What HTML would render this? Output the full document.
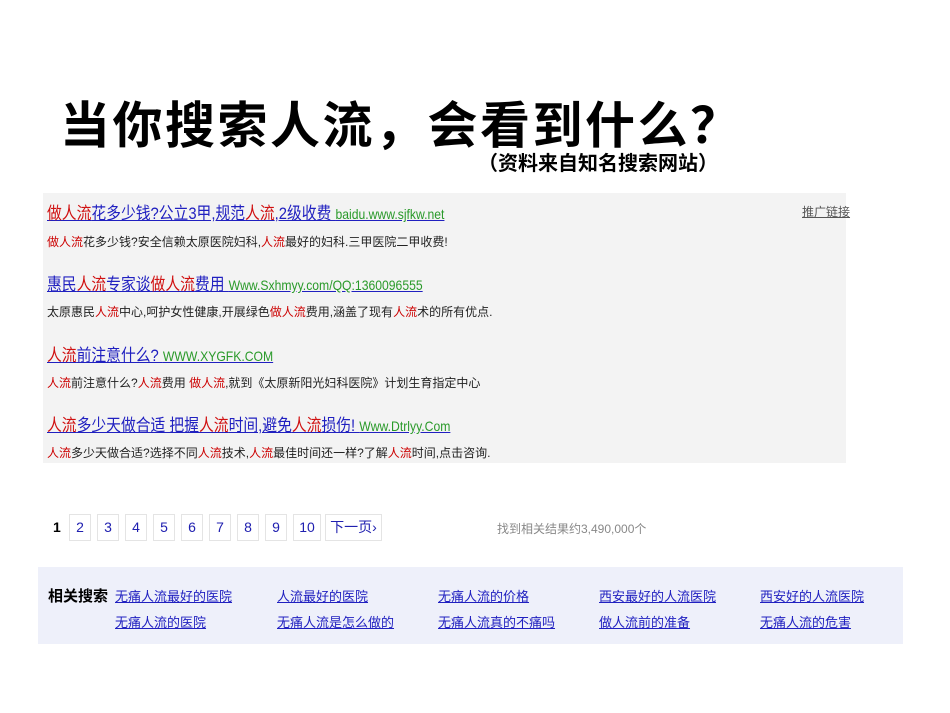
<!DOCTYPE html>
<html><head><meta charset="utf-8"><style>
body{margin:0;width:950px;height:713px;background:#fff;position:relative;overflow:hidden;font-family:"Liberation Sans","Noto Sans CJK SC",sans-serif}
.a{position:absolute;white-space:nowrap}
.r{color:#c00}
.t{font-size:17px;color:#2020c0;text-decoration:underline;transform:scaleX(.87);transform-origin:left top}
.t .r{color:#d01010}
.u{font-size:14px;color:#2a9a2a;text-decoration:none}
.d{font-size:12px;color:#222}
.d .r{color:#c00}
.pg{position:absolute;top:514px;height:25px;border:1px solid #e4e4e4;font-size:14px;color:#2020b0;text-align:center;line-height:25px}
.rel{font-size:13px;color:#2020c0;text-decoration:underline}
</style></head><body>
<div class="a" style="left:60px;top:86px;font-size:50px;font-weight:bold;color:#000;letter-spacing:2.5px;font-family:'Noto Sans CJK SC',sans-serif">当你搜索人流，会看到什么？</div>
<div class="a" style="left:478px;top:147px;font-size:20px;font-weight:bold;color:#000">（资料来自知名搜索网站）</div>
<div class="a" style="left:43px;top:193px;width:803px;height:270px;background:#f3f3f3"></div>
<div class="a" style="left:802px;top:203px;font-size:12px;color:#555;text-decoration:underline">推广链接</div>
<div class="a t" style="left:47px;top:199px"><span class="r">做人流</span>花多少钱?公立3甲,规范<span class="r">人流</span>,2级收费 <span class="u">baidu.www.sjfkw.net</span></div>
<div class="a d" style="left:47px;top:233px"><span class="r">做人流</span>花多少钱?安全信赖太原医院妇科,<span class="r">人流</span>最好的妇科.三甲医院二甲收费!</div>
<div class="a t" style="left:47px;top:270px">惠民<span class="r">人流</span>专家谈<span class="r">做人流</span>费用 <span class="u">Www.Sxhmyy.com/QQ:1360096555</span></div>
<div class="a d" style="left:47px;top:303px">太原惠民<span class="r">人流</span>中心,呵护女性健康,开展绿色<span class="r">做人流</span>费用,涵盖了现有<span class="r">人流</span>术的所有优点.</div>
<div class="a t" style="left:47px;top:341px"><span class="r">人流</span>前注意什么? <span class="u">WWW.XYGFK.COM</span></div>
<div class="a d" style="left:47px;top:374px"><span class="r">人流</span>前注意什么?<span class="r">人流</span>费用 <span class="r">做人流</span>,就到《太原新阳光妇科医院》计划生育指定中心</div>
<div class="a t" style="left:47px;top:411px"><span class="r">人流</span>多少天做合适 把握<span class="r">人流</span>时间,避免<span class="r">人流</span>损伤! <span class="u">Www.Dtrlyy.Com</span></div>
<div class="a d" style="left:47px;top:444px"><span class="r">人流</span>多少天做合适?选择不同<span class="r">人流</span>技术,<span class="r">人流</span>最佳时间还一样?了解<span class="r">人流</span>时间,点击咨询.</div>
<div class="a" style="left:53px;top:519px;font-size:14px;font-weight:bold;color:#000">1</div>
<div class="pg" style="left:69px;width:20px">2</div>
<div class="pg" style="left:97px;width:20px">3</div>
<div class="pg" style="left:125px;width:20px">4</div>
<div class="pg" style="left:153px;width:20px">5</div>
<div class="pg" style="left:181px;width:20px">6</div>
<div class="pg" style="left:209px;width:20px">7</div>
<div class="pg" style="left:237px;width:20px">8</div>
<div class="pg" style="left:265px;width:20px">9</div>
<div class="pg" style="left:293px;width:26px">10</div>
<div class="pg" style="left:325px;width:55px">下一页›</div>
<div class="a" style="left:497px;top:520px;font-size:12px;color:#888">找到相关结果约3,490,000个</div>
<div class="a" style="left:38px;top:567px;width:865px;height:77px;background:#eef0fa"></div>
<div class="a" style="left:48px;top:585px;font-size:15px;font-weight:bold;color:#000">相关搜索</div>
<div class="a rel" style="left:115px;top:586px">无痛人流最好的医院</div>
<div class="a rel" style="left:115px;top:612px">无痛人流的医院</div>
<div class="a rel" style="left:277px;top:586px">人流最好的医院</div>
<div class="a rel" style="left:277px;top:612px">无痛人流是怎么做的</div>
<div class="a rel" style="left:438px;top:586px">无痛人流的价格</div>
<div class="a rel" style="left:438px;top:612px">无痛人流真的不痛吗</div>
<div class="a rel" style="left:599px;top:586px">西安最好的人流医院</div>
<div class="a rel" style="left:599px;top:612px">做人流前的准备</div>
<div class="a rel" style="left:760px;top:586px">西安好的人流医院</div>
<div class="a rel" style="left:760px;top:612px">无痛人流的危害</div>
</body></html>
